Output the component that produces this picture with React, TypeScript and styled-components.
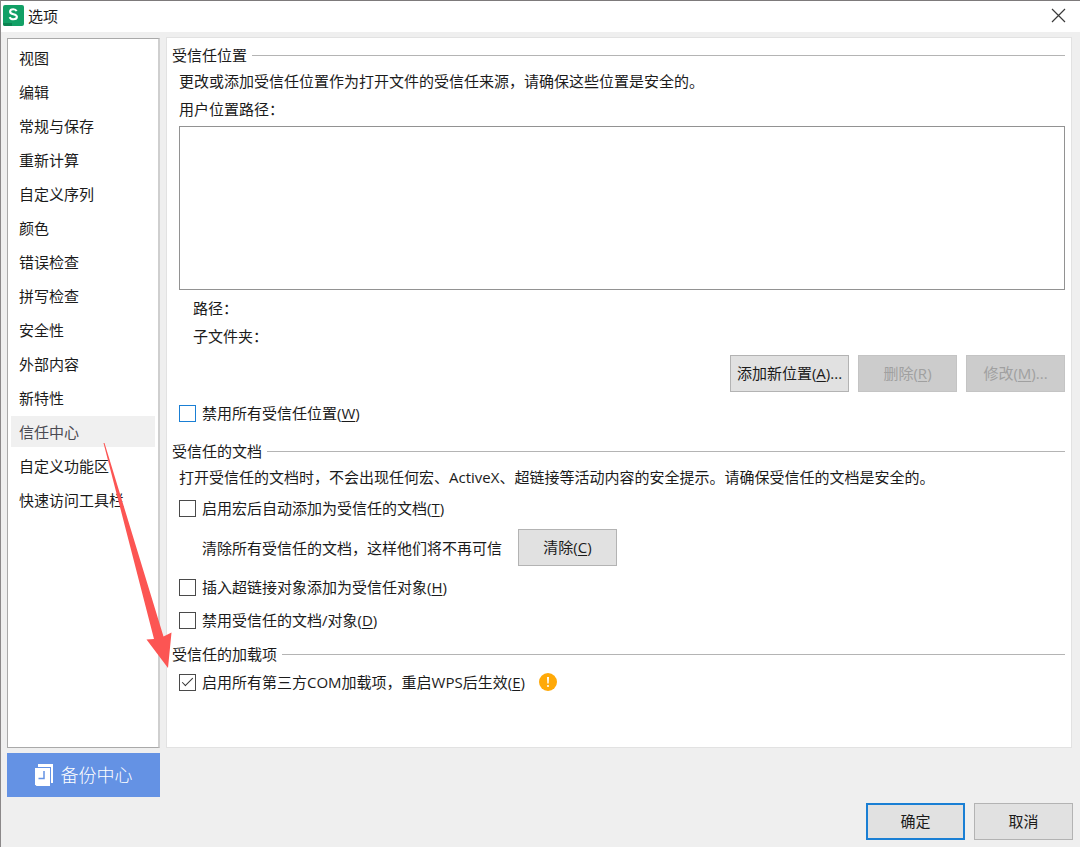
import React from 'react';
import styled, { createGlobalStyle } from 'styled-components';

const GlobalStyle = createGlobalStyle`
  *, *::before, *::after { box-sizing: border-box; }
  body {
    margin: 0;
    background: #efefef;
    color: #1b1b1b;
    font-family: "Open Sans", "Noto Sans CJK SC", sans-serif;
    font-size: 15px;
    line-height: 20px;
  }
  button, input, select { font: inherit; color: inherit; margin: 0; }
  u { text-underline-offset: 2px; text-decoration-thickness: 1px; }
`;

const Dialog = styled.div`
  position: relative;
  display: flex;
  flex-direction: column;
  min-height: 100vh;
  background: #efefef;
  border-top: 1px solid #7d7a7b;
  border-left: 1px solid #8b8889;
`;

const TitleBar = styled.header`
  display: flex;
  align-items: center;
  gap: 4px;
  height: 31px;
  padding: 0 14px 2px 2px;
  background: #fff;
`;

const Title = styled.h1`
  flex: 1;
  margin: 0;
  font-size: 15px;
  font-weight: 400;
`;

const CloseButton = styled.button`
  display: flex;
  padding: 0;
  border: 0;
  background: none;
`;

const Body = styled.div`
  flex: 1;
  display: flex;
  gap: 6px;
  padding: 5px 8px 0 6px;
`;

const Sidebar = styled.nav`
  flex: none;
  display: flex;
  flex-direction: column;
  gap: 3px;
  width: 153px;
  margin-top: 1px;
  padding: 3px 3px 4px 3px;
  background: #fff;
  border: 1px solid #a9a9a9;
  border-right: 2px solid #cfcfcf;
`;

const NavItem = styled.button<{ $active?: boolean }>`
  height: 31px;
  padding: 0 0 0 8px;
  border: 0;
  text-align: left;
  background: ${(p) => (p.$active ? '#f0f0f0' : 'transparent')};
  color: ${(p) => (p.$active ? '#4a4a52' : 'inherit')};
`;

const Panel = styled.main`
  flex: 1;
  min-width: 0;
  padding: 4px 6px 50px 5px;
  background: #fff;
  border: 1px solid #e2e2e2;
`;

const Group = styled.section`
  display: flex;
  flex-direction: column;
  padding-left: 7px;
`;

const GroupTitle = styled.h2<{ $gap?: number }>`
  display: flex;
  align-items: center;
  gap: 5px;
  height: 26px;
  margin: ${(p) => p.$gap ?? 0}px 0 0 -7px;
  font-size: 15px;
  font-weight: 400;
  white-space: nowrap;

  &::after {
    content: '';
    flex: 1;
    height: 1px;
    background: #b4b4b4;
  }
`;

const Text = styled.p`
  margin: 0;
  line-height: 26px;
`;

const ListLabel = styled.label`
  line-height: 30px;
`;

const PathList = styled.select`
  appearance: none;
  width: 100%;
  height: 164px;
  margin-top: 2px;
  padding: 0;
  background: #fff;
  border: 1px solid #929292;
  border-radius: 0;
  outline: 0;
`;

const Details = styled.div`
  padding: 4px 0 5px 14px;
  line-height: 28px;
`;

const ButtonRow = styled.div`
  display: flex;
  justify-content: flex-end;
  gap: 9px;
`;

const Button = styled.button<{ $primary?: boolean; $wide?: boolean }>`
  width: ${(p) => (p.$wide ? 119 : 99)}px;
  height: 37px;
  padding: 0 0 2px;
  background: #e1e1e1;
  border: ${(p) => (p.$primary ? '2px solid #1a7fd4' : '1px solid #b3b3b3')};
  white-space: nowrap;

  &:disabled {
    background: #cccccc;
    border-color: #c4c4c4;
    color: #a0a0a0;
  }
`;

const CheckRow = styled.label<{ $gap: number }>`
  display: flex;
  align-items: center;
  gap: 6px;
  height: 28px;
  margin-top: ${(p) => p.$gap}px;
`;

const Checkbox = styled.input<{ $hot?: boolean }>`
  appearance: none;
  display: grid;
  place-items: center;
  width: 17px;
  height: 17px;
  background: #fff;
  border: 1px solid ${(p) => (p.$hot ? '#1a7fd4' : '#4a4a4a')};

  &:checked::after {
    content: '';
    width: 11px;
    height: 5px;
    margin-bottom: 4px;
    border: solid #333;
    border-width: 0 0 1px 1px;
    transform: rotate(-45deg);
  }
`;

const ClearRow = styled.div`
  display: flex;
  align-items: center;
  margin-top: 7px;
  padding-left: 23px;
`;

const ClearText = styled.span`
  min-width: 316px;
`;

const BackupButton = styled.button`
  display: flex;
  align-items: center;
  justify-content: center;
  gap: 8px;
  width: 153px;
  height: 44px;
  margin: 5px 0 0 6px;
  padding: 0;
  border: 0;
  background: #6492e4;
  color: #fff;
  font-size: 18px;
  font-weight: 300;
`;

const Footer = styled.footer`
  display: flex;
  justify-content: flex-end;
  gap: 9px;
  padding: 6px 7px 7px;
`;

const Arrow = styled.svg`
  position: absolute;
  left: 102px;
  top: 441px;
  pointer-events: none;
`;

const AppLogo = () => (
  <svg width="21" height="21" viewBox="0 0 21 21" aria-hidden="true">
    <rect width="21" height="21" rx="2" fill="#12a066" />
    <path d="M0 18h9v3H2a2 2 0 0 1-2-2z" fill="#0b8351" />
    <path
      d="M13.6 6.2C13 4.8 11.900 4.300 10.300 4.300c-1.900 0-3.200.9-3.200 2.400 0 3.500 6.800 1.500 6.800 5.100 0 1.600-1.400 2.500-3.400 2.500-1.900 0-3.200-.7-3.800-2.200"
      fill="none"
      stroke="#fff"
      strokeWidth="2.100"
    />
  </svg>
);

const CloseIcon = () => (
  <svg width="15" height="15" viewBox="0 0 15 15" aria-hidden="true">
    <path d="M1 1l13 13M14 1L1 14" stroke="#3a3a3a" strokeWidth="1.200" />
  </svg>
);

const BackupIcon = () => (
  <svg width="18" height="22" viewBox="0 0 18 22" aria-hidden="true">
    <path d="M3 0h15v19h-2V3H3z" fill="#fff" />
    <path d="M0 4h15v18H1.500L0 20.500z" fill="#fff" />
    <path d="M9 7v7.500H3.500" fill="none" stroke="#6492e4" strokeWidth="1.500" />
  </svg>
);

const Warning = styled.svg`
  margin-left: 8px;
`;

const WarningIcon = () => (
  <Warning width="18" height="18" viewBox="0 0 18 18" role="img" aria-label="提示">
    <circle cx="9" cy="9" r="9" fill="#ffa908" />
    <path d="M8 4h2l-.3 6.500H8.300z" fill="#fff" />
    <circle cx="9" cy="13" r="1.100" fill="#fff" />
  </Warning>
);

const pages = [
  '视图', '编辑', '常规与保存', '重新计算', '自定义序列', '颜色', '错误检查',
  '拼写检查', '安全性', '外部内容', '新特性', '信任中心', '自定义功能区', '快速访问工具栏',
];

type CheckProps = {
  label: string;
  hotkey: string;
  gap: number;
  hot?: boolean;
  checked?: boolean;
  children?: React.ReactNode;
};

const Check = ({ label, hotkey, gap, hot, checked, children }: CheckProps) => (
  <CheckRow $gap={gap}>
    <Checkbox type="checkbox" $hot={hot} defaultChecked={checked} />
    <span>{label}(<u>{hotkey}</u>)</span>
    {children}
  </CheckRow>
);

export default function App() {
  const [page, setPage] = React.useState('信任中心');

  return (
    <Dialog lang="zh-CN">
      <GlobalStyle />
      <TitleBar>
        <AppLogo />
        <Title>选项</Title>
        <CloseButton aria-label="关闭"><CloseIcon /></CloseButton>
      </TitleBar>

      <Body>
        <Sidebar>
          {pages.map((name) => (
            <NavItem key={name} $active={name === page} onClick={() => setPage(name)}>
              {name}
            </NavItem>
          ))}
        </Sidebar>

        <Panel>
          <Group>
            <GroupTitle>受信任位置</GroupTitle>
            <Text>更改或添加受信任位置作为打开文件的受信任来源，请确保这些位置是安全的。</Text>
            <ListLabel htmlFor="paths">用户位置路径：</ListLabel>
            <PathList id="paths" size={6} />
            <Details>
              <div>路径：</div>
              <div>子文件夹：</div>
            </Details>
            <ButtonRow>
              <Button $wide>添加新位置(<u>A</u>)...</Button>
              <Button disabled>删除(<u>R</u>)</Button>
              <Button disabled>修改(<u>M</u>)...</Button>
            </ButtonRow>
            <Check label="禁用所有受信任位置" hotkey="W" gap={7} hot />
          </Group>

          <Group>
            <GroupTitle $gap={11}>受信任的文档</GroupTitle>
            <Text>打开受信任的文档时，不会出现任何宏、ActiveX、超链接等活动内容的安全提示。请确保受信任的文档是安全的。</Text>
            <Check label="启用宏后自动添加为受信任的文档" hotkey="T" gap={4} />
            <ClearRow>
              <ClearText>清除所有受信任的文档，这样他们将不再可信</ClearText>
              <Button>清除(<u>C</u>)</Button>
            </ClearRow>
            <Check label="插入超链接对象添加为受信任对象" hotkey="H" gap={7} />
            <Check label="禁用受信任的文档/对象" hotkey="D" gap={5} />
          </Group>

          <Group>
            <GroupTitle $gap={7}>受信任的加载项</GroupTitle>
            <Check label="启用所有第三方COM加载项，重启WPS后生效" hotkey="E" gap={1} checked>
              <WarningIcon />
            </Check>
          </Group>
        </Panel>
      </Body>

      <BackupButton><BackupIcon />备份中心</BackupButton>

      <Footer>
        <Button $primary>确定</Button>
        <Button>取消</Button>
      </Footer>

      <Arrow width="70" height="228" viewBox="0 0 70 228" aria-hidden="true">
        <path d="M0.500 1L1.500 1L60.500 194.500L68.500 190.500L65 226L43.500 197.500L51 197Z" fill="#fc5553" />
      </Arrow>
    </Dialog>
  );
}
